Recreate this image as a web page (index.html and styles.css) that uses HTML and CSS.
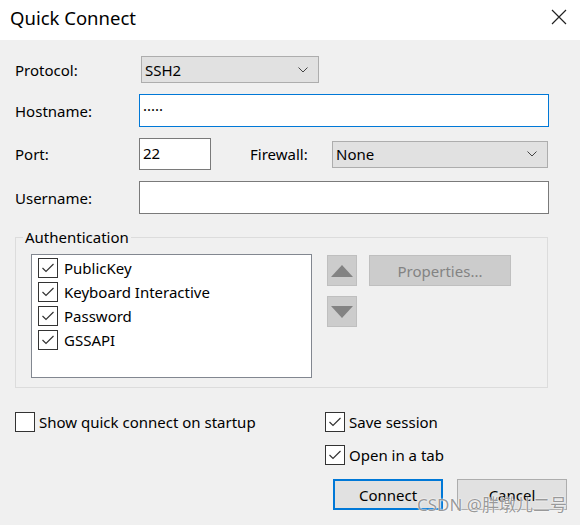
FILE: index.html
```html
<!DOCTYPE html>
<html>
<head>
<meta charset="utf-8">
<link rel="stylesheet" href="styles.css">
</head>
<body>
<div class="titlebar">
  <span class="title">Quick Connect</span>
  <svg class="close" width="16" height="16" viewBox="0 0 16 16"><path d="M1 1L15 15M15 1L1 15" stroke="#222" stroke-width="1.2" fill="none"/></svg>
</div>
<div class="form">
  <label class="lbl">Protocol:</label>
  <div class="select sel-proto"><span>SSH2</span><svg class="chev" width="10" height="6" viewBox="0 0 10 6"><path d="M0.5 0.5L5 5L9.5 0.5" stroke="#444" stroke-width="1" fill="none"/></svg></div>

  <label class="lbl">Hostname:</label>
  <div class="input focus">·····</div>

  <label class="lbl">Port:</label>
  <div class="portrow">
    <div class="input port">22</div>
    <label class="lbl fw">Firewall:</label>
    <div class="select sel-fw"><span>None</span><svg class="chev" width="10" height="6" viewBox="0 0 10 6"><path d="M0.5 0.5L5 5L9.5 0.5" stroke="#444" stroke-width="1" fill="none"/></svg></div>
  </div>

  <label class="lbl">Username:</label>
  <div class="input"></div>
</div>

<fieldset class="group">
  <legend>Authentication</legend>
  <div class="auth">
    <div class="listbox">
      <div class="item"><span class="cb checked"><svg width="18" height="18" viewBox="0 0 18 18"><path d="M3.5 9L7 12.5L14.5 5" stroke="#333" stroke-width="1.2" fill="none"/></svg></span>PublicKey</div>
      <div class="item"><span class="cb checked"><svg width="18" height="18" viewBox="0 0 18 18"><path d="M3.5 9L7 12.5L14.5 5" stroke="#333" stroke-width="1.2" fill="none"/></svg></span>Keyboard Interactive</div>
      <div class="item"><span class="cb checked"><svg width="18" height="18" viewBox="0 0 18 18"><path d="M3.5 9L7 12.5L14.5 5" stroke="#333" stroke-width="1.2" fill="none"/></svg></span>Password</div>
      <div class="item"><span class="cb checked"><svg width="18" height="18" viewBox="0 0 18 18"><path d="M3.5 9L7 12.5L14.5 5" stroke="#333" stroke-width="1.2" fill="none"/></svg></span>GSSAPI</div>
    </div>
    <div class="arrows">
      <div class="btn-dis sq"><svg width="24" height="14" viewBox="0 0 24 14"><path d="M12 1L23 13H1Z" fill="#838383"/></svg></div>
      <div class="btn-dis sq"><svg width="24" height="14" viewBox="0 0 24 14"><path d="M1 1H23L12 13Z" fill="#838383"/></svg></div>
    </div>
    <div class="btn-dis props">Properties...</div>
  </div>
</fieldset>

<div class="bottom">
  <div class="chk"><span class="cb"></span>Show quick connect on startup</div>
  <div class="chk"><span class="cb checked"><svg width="18" height="18" viewBox="0 0 18 18"><path d="M3.5 9L7 12.5L14.5 5" stroke="#333" stroke-width="1.2" fill="none"/></svg></span>Save session</div>
  <div></div>
  <div class="chk"><span class="cb checked"><svg width="18" height="18" viewBox="0 0 18 18"><path d="M3.5 9L7 12.5L14.5 5" stroke="#333" stroke-width="1.2" fill="none"/></svg></span>Open in a tab</div>
</div>

<div class="buttons">
  <div class="btn default">Connect</div>
  <div class="btn">Cancel</div>
</div>

<div class="watermark">CSDN @胖墩儿二号</div>
</body>
</html>
```

FILE: styles.css
```css
* { box-sizing: border-box; }
html, body { margin: 0; padding: 0; }
body {
  width: 580px;
  height: 525px;
  background: #f0f0f0;
  font-family: "Noto Sans", "Noto Sans CJK SC", sans-serif;
  font-size: 15px;
  color: #000;
  overflow: hidden;
  position: relative;
}
.titlebar {
  height: 40px;
  background: #fff;
  display: flex;
  align-items: center;
  justify-content: space-between;
  padding: 0 13px 0 10px;
}
.title { font-size: 18.5px; line-height: 24px; margin-top: -5px; }
.close { margin-top: -6px; }

.form {
  padding: 16px 31px 0 15px;
  display: grid;
  grid-template-columns: 124px 1fr;
  row-gap: 11px;
  align-items: center;
}
.lbl { line-height: 20px; }
.select {
  height: 27px;
  background: #e1e1e1;
  border: 1px solid #adadad;
  display: flex;
  align-items: center;
  justify-content: space-between;
  padding: 0 10px 0 3px;
}
.sel-proto { width: 178px; margin-left: 2px; }
.input {
  height: 33px;
  background: #fff;
  border: 1px solid #7a7a7a;
  padding: 3px 0 0 3px;
  line-height: 22px;
}
.input.focus { border-color: #0078d7; }
.portrow { display: flex; align-items: center; height: 32px; }
.port { width: 72px; height: 32px; }
.fw { margin-left: 39px; width: 82px; }
.sel-fw { width: 216px; }

.group {
  margin: 13px 32px 0 15px;
  border: 1px solid #dcdcdc;
  padding: 7px 15px 9px 15px;
  min-width: 0;
}
.group legend {
  padding: 0 2px;
  margin-left: -8px;
  line-height: 20px;
}
.auth { display: flex; align-items: flex-start; }
.listbox {
  width: 281px;
  height: 124px;
  background: #fff;
  border: 1px solid #828790;
  padding: 1px 0 0 6px;
}
.item {
  height: 24px;
  display: flex;
  align-items: center;
  gap: 6px;
}
.cb {
  width: 20px;
  height: 20px;
  border: 1px solid #333;
  background: #fff;
  display: inline-flex;
  align-items: center;
  justify-content: center;
  flex: none;
}
.arrows {
  margin-left: 15px;
  margin-top: 1px;
  display: flex;
  flex-direction: column;
  gap: 10px;
}
.btn-dis {
  background: #cccccc;
  border: 1px solid #bfbfbf;
  color: #838383;
  display: flex;
  align-items: center;
  justify-content: center;
}
.sq { width: 30px; height: 31px; }
.props { width: 142px; height: 31px; margin-left: 12px; margin-top: 1px; }

.bottom {
  margin-top: 24px;
  display: grid;
  grid-template-columns: 310px 1fr;
  row-gap: 13px;
  padding-left: 15px;
}
.chk { display: flex; align-items: center; gap: 4px; height: 20px; }

.buttons {
  margin-top: 14px;
  display: flex;
  justify-content: flex-end;
  gap: 14px;
  padding-right: 13px;
}
.btn {
  width: 110px;
  height: 31px;
  background: #e1e1e1;
  border: 1px solid #adadad;
  display: flex;
  align-items: center;
  justify-content: center;
}
.btn.default { border: 2px solid #0078d7; }

.watermark {
  position: absolute;
  left: 417px;
  top: 495px;
  font-size: 17px;
  line-height: 20px;
  color: rgba(120, 120, 120, 0.75);
  text-shadow: 0 0 2px #fff, 0 0 1px #fff;
  white-space: nowrap;
}
```
